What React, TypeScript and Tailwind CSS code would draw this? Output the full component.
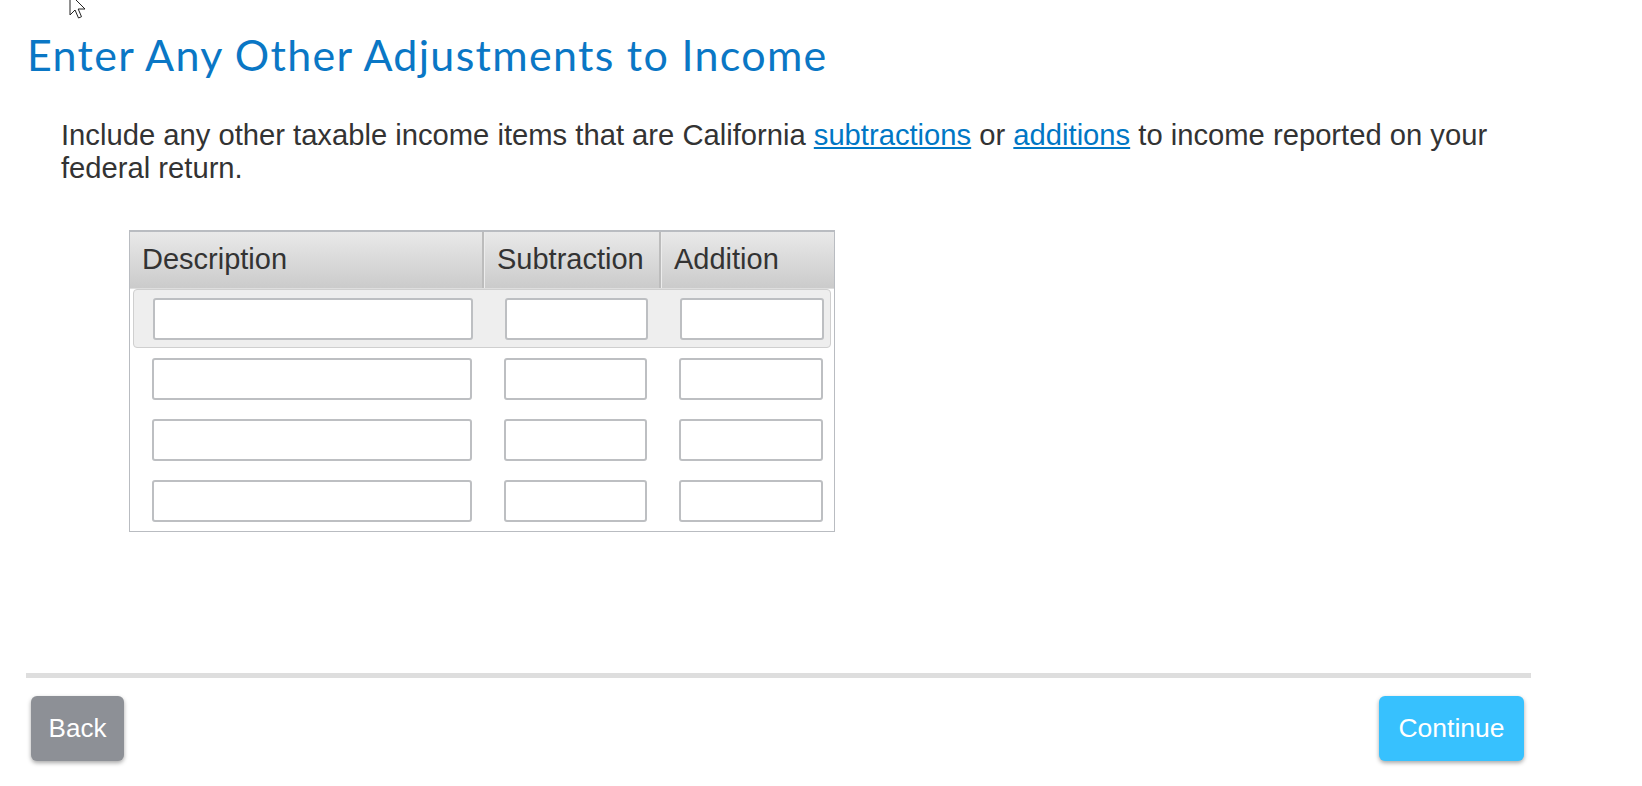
import React from "react";

const rows = [0, 1, 2, 3];

function Field({ w }: { w: string }) {
  return (
    <input
      type="text"
      className={`${w} h-[42px] rounded-[3px] border-2 border-[#bdbfc2] bg-white outline-none`}
    />
  );
}

function Cursor() {
  return (
    <svg
      className="absolute left-[69px] top-[-7px]"
      width="20"
      height="30"
      viewBox="0 0 20 30"
    >
      <path
        d="M1 1 L1 22 L6 17 L9.5 25 L12.5 23.7 L9.2 16 L16 16 Z"
        fill="#fff"
        stroke="#222"
        strokeWidth="1"
        strokeLinejoin="round"
      />
    </svg>
  );
}

export default function App() {
  return (
    <div className="relative w-[1642px] h-[786px] bg-white overflow-hidden font-['Liberation_Sans',Arial,sans-serif] text-[#333]">
      <Cursor />

      <div className="pl-[27px] pt-[29px]">
        {/* Title */}
        <h1 className="font-['Lato',sans-serif] text-[43px] leading-[1.2] font-normal tracking-[1.3px] text-[#0a77c5]">
          Enter Any Other Adjustments to Income
        </h1>

        {/* Intro */}
        <p className="mt-[38px] pl-[34px] text-[29.2px] leading-[33px] w-[1470px]">
          Include any other taxable income items that are California{" "}
          <a href="#" className="text-[#0077c5] underline">
            subtractions
          </a>{" "}
          or{" "}
          <a href="#" className="text-[#0077c5] underline">
            additions
          </a>{" "}
          to income reported on your federal return.
        </p>

        {/* Table */}
        <div className="mt-[45px] ml-[102px] w-[706px] border border-[#b9bcc1] border-t-2">
          <div className="flex h-[57px] bg-linear-to-b from-[#e9e9e9] to-[#cbcbcb] border-b border-[#dedede] text-[29px] leading-none">
            <div className="w-[354px] flex items-center pl-[12px] border-r-2 border-[#bcbcbc]">Description</div>
            <div className="w-[177px] flex items-center pl-[12px] border-r-2 border-[#bcbcbc] border-l border-l-[#ececec]">
              Subtraction
            </div>
            <div className="flex-1 flex items-center pl-[12px] border-l border-l-[#ececec]">Addition</div>
          </div>

          {rows.map((r) => (
            <div
              key={r}
              className={
                r === 0
                  ? "mx-[3px] h-[59px] pt-[8px] pl-[19px] flex gap-[32px] rounded-[4px] border border-[#cfcfcf] bg-[#eeeeee]"
                  : "h-[61px] pt-[10px] pl-[22px] flex gap-[32px]"
              }
            >
              <Field w="w-[320px]" />
              <Field w="w-[143px]" />
              <Field w="w-[144px]" />
            </div>
          ))}
        </div>
      </div>

      {/* Footer */}
      <div className="absolute left-[26px] top-[673px] w-[1505px]">
        <div className="h-[5px] bg-[#dedede]" />
        <div className="mt-[18px] flex justify-between pl-[5px] pr-[7px]">
          <button className="w-[93px] h-[65px] rounded-[6px] bg-[#8d9096] text-white text-[26px] shadow-[0_2px_4px_rgba(0,0,0,0.35)]">
            Back
          </button>
          <button className="w-[145px] h-[65px] rounded-[6px] bg-[#37c1fe] text-white text-[26.5px] shadow-[0_2px_4px_rgba(0,0,0,0.35)]">
            Continue
          </button>
        </div>
      </div>
    </div>
  );
}
